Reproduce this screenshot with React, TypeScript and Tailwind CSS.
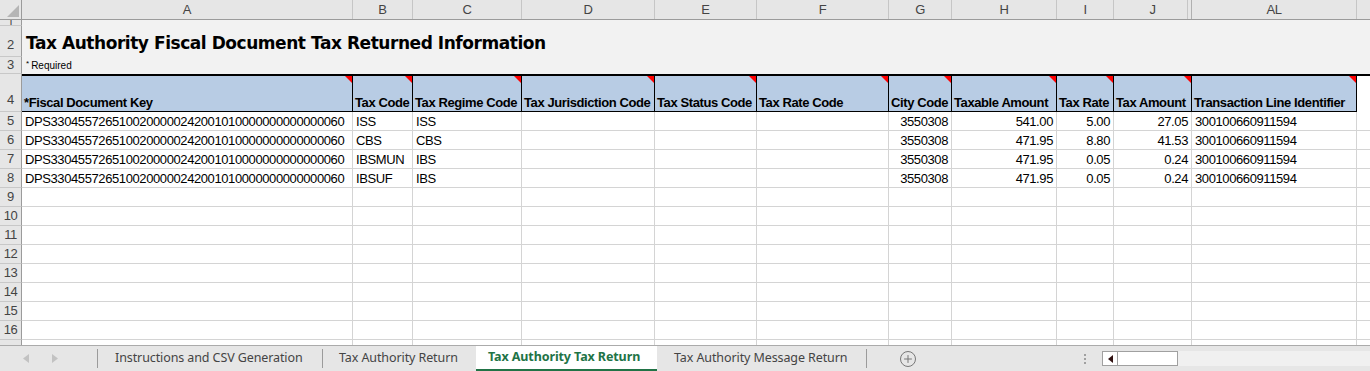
import { Plus } from 'lucide-react';

const cols = [
  { k: 'A', w: 'w-[331px]' },
  { k: 'B', w: 'w-[60px]' },
  { k: 'C', w: 'w-[109px]' },
  { k: 'D', w: 'w-[133px]' },
  { k: 'E', w: 'w-[102px]' },
  { k: 'F', w: 'w-[132px]' },
  { k: 'G', w: 'w-[63px]' },
  { k: 'H', w: 'w-[105px]' },
  { k: 'I', w: 'w-[57px]' },
  { k: 'J', w: 'w-[78px]' },
  { k: 'AL', w: 'w-[165px]' },
];

const headers = [
  '*Fiscal Document Key',
  'Tax Code',
  'Tax Regime Code',
  'Tax Jurisdiction Code',
  'Tax Status Code',
  'Tax Rate Code',
  'City Code',
  'Taxable Amount',
  'Tax Rate',
  'Tax Amount',
  'Transaction Line Identifier',
];

const KEY = 'DPS3304557265100200000242001010000000000000060';

const rows = [
  [KEY, 'ISS', 'ISS', '', '', '', '3550308', '541.00', '5.00', '27.05', '300100660911594'],
  [KEY, 'CBS', 'CBS', '', '', '', '3550308', '471.95', '8.80', '41.53', '300100660911594'],
  [KEY, 'IBSMUN', 'IBS', '', '', '', '3550308', '471.95', '0.05', '0.24', '300100660911594'],
  [KEY, 'IBSUF', 'IBS', '', '', '', '3550308', '471.95', '0.05', '0.24', '300100660911594'],
];

const rightAligned = [6, 7, 8, 9];

function RowHead({ n, h }: { n?: number; h: string }) {
  return (
    <div className={`${h} flex w-[22px] shrink-0 items-center justify-center overflow-hidden border-r border-b border-r-[#9b9b9b] border-b-[#c8c8c8] bg-[#e6e6e6] text-[#444]`}>
      {n}
    </div>
  );
}

function Comment() {
  return (
    <svg width="7" height="7" viewBox="0 0 7 7" className="absolute top-0 right-0">
      <polygon points="0,0 7,0 7,7" fill="#ff0000" />
    </svg>
  );
}

export default function App() {
  return (
    <div className="h-[371px] w-[1370px] overflow-hidden bg-white font-['Liberation_Sans',Arial,sans-serif] text-[13px] tracking-[-0.4px] text-black">
      {/* column letters */}
      <div className="flex h-[20px] border-b border-[#9b9b9b] bg-[#e6e6e6] text-[#444]">
        <div className="relative w-[22px] shrink-0 border-r border-[#9b9b9b]">
          <svg width="12" height="12" viewBox="0 0 12 12" className="absolute right-[2px] bottom-[2px]">
            <polygon points="12,0 12,12 0,12" fill="#b5b5b5" />
          </svg>
        </div>
        {cols.map((c) => (
          <div key={c.k} className={`${c.w} flex shrink-0 items-center justify-center border-r border-[#c6c6c6] ${c.k === 'J' ? 'border-r-[#b0b0b0] shadow-[inset_-3px_0_0_#e6e6e6,inset_-4px_0_0_#c6c6c6]' : ''}`}>
            {c.k}
          </div>
        ))}
        <div className="flex-1" />
      </div>

      <div className="h-[325px] overflow-hidden">
        {/* row 1 */}
        <div className="flex h-[6px]">
          <RowHead n={1} h="h-[6px] text-[11px] leading-none" />
          <div className="flex-1 bg-[#f2f2f2]" />
        </div>
        {/* row 2 title */}
        <div className="flex h-[31px]">
          <RowHead n={2} h="h-[31px] pt-[8px]" />
          <div className="flex flex-1 items-end bg-[#f2f2f2] pb-[1px] pl-[4px] font-['DejaVu_Sans',Verdana,sans-serif] text-[17px] font-bold tracking-[-0.45px]">
            Tax Authority Fiscal Document Tax Returned Information
          </div>
        </div>
        {/* row 3 */}
        <div className="flex h-[17px]">
          <RowHead n={3} h="h-[17px]" />
          <div className="flex flex-1 items-center bg-[#f2f2f2] pl-[4px] text-[10px] tracking-normal">
            <span className="mr-[2px] -mt-[4px] text-[8px]">*</span>Required
          </div>
        </div>
        {/* row 4 headers */}
        <div className="flex h-[38px]">
          <RowHead n={4} h="h-[38px] items-end pb-[2px]" />
          {cols.map((c, i) => (
            <div key={c.k} className={`${c.w} relative flex shrink-0 items-end overflow-hidden whitespace-nowrap border-t-2 border-r border-b border-black bg-[#b8cce4] pl-[2px] leading-[16px] font-bold`}>
              {headers[i]}
              <Comment />
            </div>
          ))}
          <div className="flex-1 border-t-2 border-black" />
        </div>
        {/* data rows */}
        {Array.from({ length: 13 }, (_, r) => {
          const data = rows[r];
          const last = r === 12;
          return (
            <div key={r} className="flex h-[19px]">
              <RowHead n={last ? undefined : r + 5} h="h-[19px]" />
              {cols.map((c, i) => (
                <div
                  key={c.k}
                  className={`${c.w} flex shrink-0 items-center overflow-hidden whitespace-nowrap border-r border-b border-[#d4d4d4] px-[3px] pt-[1px] ${rightAligned.includes(i) ? 'justify-end' : ''}`}
                >
                  {data ? data[i] : ''}
                </div>
              ))}
              <div className="flex-1 border-b border-[#d4d4d4]" />
            </div>
          );
        })}
      </div>

      {/* sheet tabs */}
      <div className="flex h-[26px] items-stretch border-t border-[#ababab] bg-[#e6e6e6] font-['Noto_Sans',sans-serif] text-[12.5px] tracking-[-0.1px] text-[#444]">
        <div className="flex w-[97px] shrink-0 items-center">
          <svg width="6" height="9" viewBox="0 0 6 9" className="ml-[23px]">
            <polygon points="6,0 6,9 0,4.5" fill="#c2c2c2" />
          </svg>
          <svg width="6" height="9" viewBox="0 0 6 9" className="ml-[23px]">
            <polygon points="0,0 0,9 6,4.5" fill="#c2c2c2" />
          </svg>
        </div>
        <div className="my-[3px] w-px bg-[#9b9b9b]" />
        <div className="flex w-[224px] items-center pl-[17px]">Instructions and CSV Generation</div>
        <div className="my-[3px] w-px bg-[#9b9b9b]" />
        <div className="flex w-[153px] items-center pl-[16px]">Tax Authority Return</div>
        <div className="flex w-[181px] items-center border-b-2 border-[#217346] bg-white pl-[12px] font-bold text-[#217346]">
          Tax Authority Tax Return
        </div>
        <div className="flex w-[209px] items-center pl-[17px]">Tax Authority Message Return</div>
        <div className="my-[3px] w-px bg-[#9b9b9b]" />
        <div className="flex w-[82px] items-center pl-[33px]">
          <div className="flex h-[16px] w-[16px] items-center justify-center rounded-full border border-[#777]">
            <Plus size={12} strokeWidth={2} className="text-[#777]" />
          </div>
        </div>
        <div className="flex w-[153px] flex-col items-end justify-center gap-[2px] pr-[16px]">
          <div className="h-[2px] w-[2px] bg-[#a0a0a0]" />
          <div className="h-[2px] w-[2px] bg-[#a0a0a0]" />
          <div className="h-[2px] w-[2px] bg-[#a0a0a0]" />
        </div>
        <div className="flex flex-1 items-center">
          <div className="flex h-[15px] w-[76px] items-stretch border border-[#a0a0a0] bg-white">
            <div className="flex w-[15px] items-center justify-center border-r border-[#a0a0a0]">
              <svg width="5" height="8" viewBox="0 0 5 8">
                <polygon points="5,0 5,8 0,4" fill="#301010" />
              </svg>
            </div>
          </div>
          <div className="h-[15px] flex-1 bg-[#f0f0f0]" />
        </div>
      </div>
    </div>
  );
}
